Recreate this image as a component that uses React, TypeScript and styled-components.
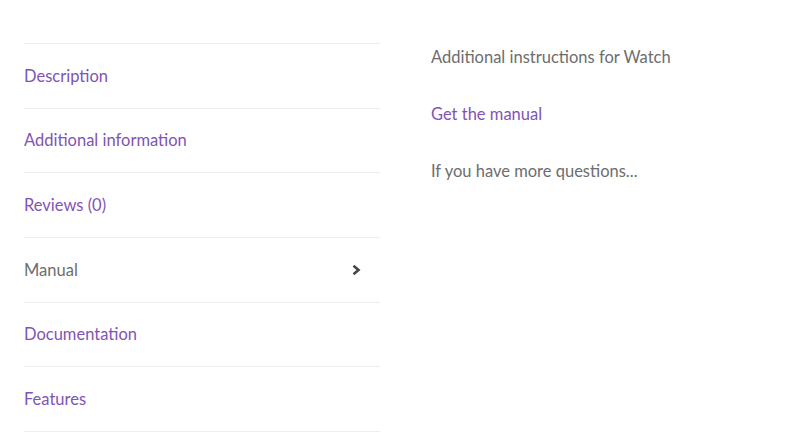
import React from "react";
import styled, { createGlobalStyle } from "styled-components";

const Global = createGlobalStyle`
  html, body { margin: 0; padding: 0; background: #ffffff; }
  body { font-family: Lato, "Liberation Sans", sans-serif; font-size: 16.5px; color: #6d6d6d; }
  * { box-sizing: border-box; }
`;

const Page = styled.div`
  display: grid;
  grid-template-columns: 356px 1fr;
  column-gap: 51px;
  padding: 43px 24px 0 24px;
  width: 804px;
  height: 448px;
`;

const TabList = styled.ul`
  list-style: none;
  margin: 0;
  padding: 0;
  border-top: 1px solid #eeeeee;
  align-self: start;
`;

const TabItem = styled.li`
  border-bottom: 1px solid #eeeeee;
`;

const TabLink = styled.a<{ $active?: boolean }>`
  display: flex;
  align-items: center;
  justify-content: space-between;
  padding: 18.83px 18px 18.83px 0;
  line-height: 26px;
  font-size: 16.5px;
  color: ${(p) => (p.$active ? "#6d6d6d" : "#7f54b3")};
  text-decoration: none;
  cursor: pointer;
`;

const Chevron = styled.svg`
  width: 11px;
  height: 12px;
  display: block;
`;

const Panel = styled.div`
  padding-top: 1px;
`;

const Para = styled.p`
  margin: 0 0 31px 0;
  line-height: 26px;
  font-size: 16.5px;
  color: #6d6d6d;
`;

const Link = styled.a`
  color: #7f54b3;
  text-decoration: none;
`;

const tabs = [
  "Description",
  "Additional information",
  "Reviews (0)",
  "Manual",
  "Documentation",
  "Features",
];

export default function App() {
  return (
    <>
      <Global />
      <Page>
        <TabList>
          {tabs.map((t) => {
            const active = t === "Manual";
            return (
              <TabItem key={t}>
                <TabLink $active={active}>
                  <span>{t}</span>
                  {active && (
                    <Chevron viewBox="0 0 11 12">
                      <path
                        d="M2.5 1.8 L7.5 6 L2.5 10.2"
                        fill="none"
                        stroke="#43454b"
                        strokeWidth="2.6"
                        strokeLinecap="butt"
                        strokeLinejoin="miter"
                      />
                    </Chevron>
                  )}
                </TabLink>
              </TabItem>
            );
          })}
        </TabList>
        <Panel>
          <Para>Additional instructions for Watch</Para>
          <Para>
            <Link>Get the manual</Link>
          </Para>
          <Para>If you have more questions...</Para>
        </Panel>
      </Page>
    </>
  );
}
